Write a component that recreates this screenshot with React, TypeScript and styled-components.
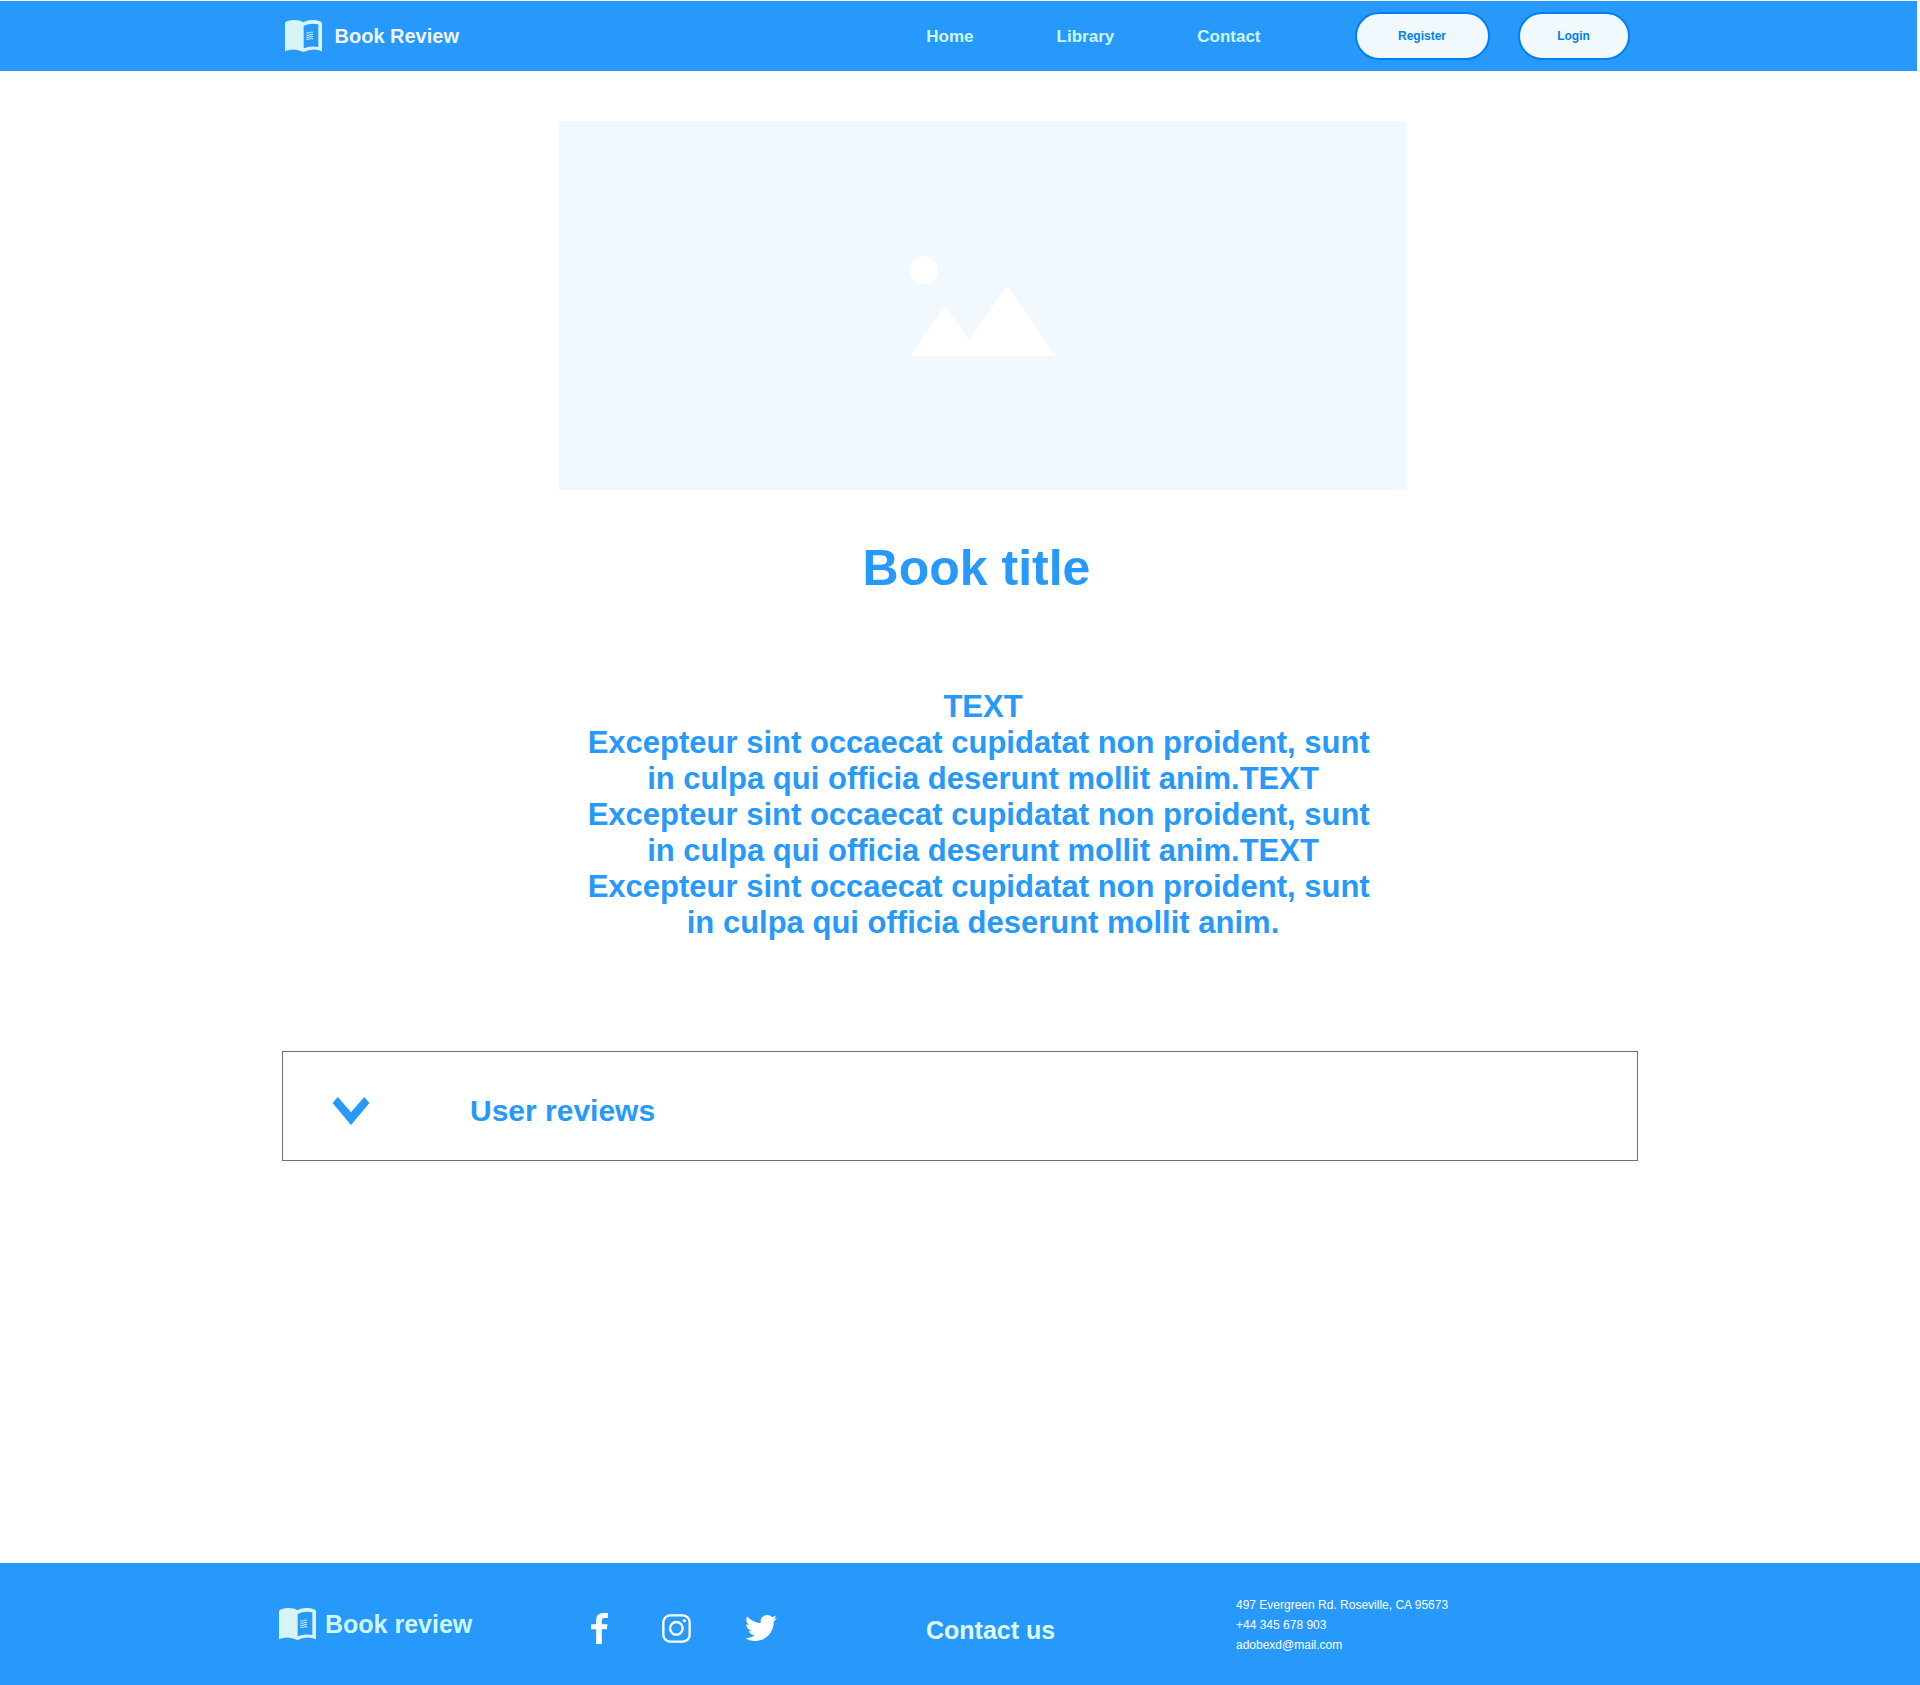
import React, { useState } from "react";
import styled, { createGlobalStyle } from "styled-components";
import { FaTwitter } from "react-icons/fa";

const color = {
  blue: "#2699fb",
  deepBlue: "#0080f0",
  pale: "#f1f9ff",
  mint: "#d8f5f5",
  ice: "#cdf8ff",
  line: "#707070",
};

const GlobalStyle = createGlobalStyle`
  * { box-sizing: border-box; }
  body {
    margin: 0;
    background: #fff;
    font-family: "Liberation Sans", Arial, sans-serif;
  }
  h1, h2, p { margin: 0; }
  a { color: inherit; text-decoration: none; }
`;

const Page = styled.div`
  min-height: 100vh;
  display: flex;
  flex-direction: column;
`;

const Header = styled.header`
  background: ${color.blue};
  margin: 1px 3px 0 0;
`;

const HeaderInner = styled.div`
  max-width: 1356px;
  min-height: 70px;
  margin: 0 auto;
  padding: 0 7px 0 4px;
  display: flex;
  align-items: center;
`;

const Brand = styled.a<{ $size: number; $gap: number; $tone: string }>`
  display: flex;
  align-items: center;
  gap: ${(p) => p.$gap}px;
  font-size: ${(p) => p.$size}px;
  font-weight: bold;
  color: ${(p) => p.$tone};
`;

const Nav = styled.nav`
  margin-left: auto;
  padding-top: 2px;
  display: flex;
  gap: 83px;
`;

const NavLink = styled.a`
  font-size: 17px;
  font-weight: bold;
  color: ${color.ice};
`;

const Actions = styled.div`
  display: flex;
  gap: 28px;
  margin-left: 94px;
`;

const PillButton = styled.button`
  min-width: 112px;
  height: 48px;
  padding: 0 32px;
  border: 2px solid ${color.deepBlue};
  border-radius: 24px;
  background: ${color.pale};
  color: ${color.deepBlue};
  font: bold 12px "Liberation Sans", Arial, sans-serif;
  cursor: pointer;
`;

const RegisterButton = styled(PillButton)`
  min-width: 135px;
`;

const Main = styled.main`
  width: 100%;
  max-width: 1356px;
  margin: 0 auto;
  padding: 50px 0 80px;
`;

const Article = styled.article`
  display: flex;
  flex-direction: column;
  align-items: center;
  padding-left: 46px;
`;

const Cover = styled.div`
  width: 100%;
  max-width: 848px;
  aspect-ratio: 848 / 369;
  display: flex;
  align-items: center;
  justify-content: center;
  background: ${color.pale};
`;

const Title = styled.h1`
  margin-top: 49px;
  padding-right: 13px;
  font-size: 50px;
  line-height: 58px;
  color: ${color.blue};
`;

const Summary = styled.p`
  max-width: 800px;
  margin-top: 92px;
  font-size: 31px;
  line-height: 36px;
  font-weight: bold;
  text-align: center;
  white-space: break-spaces;
  color: ${color.blue};
`;

const Reviews = styled.section`
  margin-top: 110px;
  border: 1px solid ${color.line};
`;

const ReviewsToggle = styled.button`
  width: 100%;
  min-height: 108px;
  padding: 10px 49px 0;
  display: flex;
  align-items: center;
  gap: 100px;
  border: 0;
  background: none;
  color: ${color.blue};
  font: bold 30px "Liberation Sans", Arial, sans-serif;
  cursor: pointer;
`;

const ReviewsBody = styled.p`
  padding: 0 49px 32px 186px;
  font-size: 17px;
  color: ${color.blue};
`;

const Footer = styled.footer`
  margin-top: auto;
  background: ${color.blue};
`;

const FooterInner = styled.div`
  max-width: 1362px;
  min-height: 122px;
  margin: 0 auto;
  display: grid;
  grid-template-columns: 312fr 335fr 310fr 405fr;
  align-items: center;
`;

const Social = styled.div`
  display: flex;
  align-items: center;
  gap: 54px;
  padding-top: 8px;
  color: #fff;

  a { display: flex; }
`;

const ContactHeading = styled.h2`
  padding-top: 12px;
  font-size: 25px;
  color: #e0ffff;
`;

const Address = styled.address`
  display: flex;
  flex-direction: column;
  padding-top: 2px;
  font-size: 12px;
  line-height: 20px;
  font-style: normal;
  color: #fff;
`;

function BookIcon() {
  return (
    <svg width="37" height="32" viewBox="0 0 111 96" aria-hidden="true">
      <path
        fill={color.mint}
        fillRule="evenodd"
        d="M0 9 Q4 1 27 0 Q45 0 55 7 Q66 0 84 0 Q107 1 111 9 V94 Q84 82 55 96 Q27 82 0 94 Z M56 18 Q74 8 100 13 V81 Q76 77 56 85 Z"
      />
      <path
        stroke={color.mint}
        strokeWidth="3"
        fill="none"
        d="M64 38 Q70 41 74 38 T84 37 M64 45 Q70 48 74 45 T84 44 M64 51 Q70 54 74 51 T84 50 M64 57 Q70 60 74 57 T84 57"
      />
    </svg>
  );
}

function LandscapeIcon() {
  return (
    <svg width="146" height="100" viewBox="0 0 146 100" fill="#fff" aria-hidden="true">
      <circle cx="14" cy="14" r="14" />
      <path d="M0 100 L35 50 L59 84 L97 30 L146 100 Z" />
    </svg>
  );
}

function ChevronIcon() {
  return (
    <svg width="38" height="28" viewBox="0 0 112 85" fill="currentColor" aria-hidden="true">
      <path d="M0 18 L16 0 L56 46 L96 0 L112 18 L56 85 Z" />
    </svg>
  );
}

function FacebookIcon() {
  return (
    <svg width="17" height="31" viewBox="0 0 50 93" fill="currentColor" aria-hidden="true">
      <path d="M50 0 H36 Q15 0 15 21 V34 H0 V49 H15 V93 H32 V49 H47 L49 34 H32 V23 Q32 15 40 15 H50 Z" />
    </svg>
  );
}

function InstagramIcon() {
  return (
    <svg width="29" height="29" viewBox="0 0 87 87" aria-hidden="true">
      <rect x="4" y="4" width="79" height="79" rx="21" fill="none" stroke="currentColor" strokeWidth="7" />
      <circle cx="43" cy="43" r="19" fill="none" stroke="currentColor" strokeWidth="7" />
      <circle cx="67" cy="20" r="5" fill="currentColor" />
    </svg>
  );
}

const links = ["Home", "Library", "Contact"];

const sentence =
  "Excepteur sint occaecat cupidatat non proident, sunt in culpa qui officia deserunt mollit anim.";
const summary = Array(3).fill(sentence).join("TEXT\n");

export default function App() {
  const [open, setOpen] = useState(false);

  return (
    <>
      <GlobalStyle />
      <Page>
        <Header>
          <HeaderInner>
            <Brand href="#" $size={20} $gap={13} $tone="#f1f5f9">
              <BookIcon />
              Book Review
            </Brand>
            <Nav>
              {links.map((label) => (
                <NavLink key={label} href="#">
                  {label}
                </NavLink>
              ))}
            </Nav>
            <Actions>
              <RegisterButton type="button">Register</RegisterButton>
              <PillButton type="button">Login</PillButton>
            </Actions>
          </HeaderInner>
        </Header>

        <Main>
          <Article>
            <Cover>
              <LandscapeIcon />
            </Cover>
            <Title>Book title</Title>
            <Summary>{`TEXT\n${summary}`}</Summary>
          </Article>
          <Reviews>
            <ReviewsToggle type="button" aria-expanded={open} onClick={() => setOpen(!open)}>
              <ChevronIcon />
              User reviews
            </ReviewsToggle>
            {open && <ReviewsBody>No reviews yet.</ReviewsBody>}
          </Reviews>
        </Main>

        <Footer>
          <FooterInner>
            <Brand href="#" $size={25} $gap={9} $tone={color.ice}>
              <BookIcon />
              Book review
            </Brand>
            <Social>
              <a href="#" aria-label="Facebook">
                <FacebookIcon />
              </a>
              <a href="#" aria-label="Instagram">
                <InstagramIcon />
              </a>
              <a href="#" aria-label="Twitter">
                <FaTwitter size={32} />
              </a>
            </Social>
            <ContactHeading>Contact us</ContactHeading>
            <Address>
              <span>497 Evergreen Rd. Roseville, CA 95673</span>
              <a href="tel:+44345678903">+44 345 678 903</a>
              <a href="mailto:adobexd@mail.com">adobexd@mail.com</a>
            </Address>
          </FooterInner>
        </Footer>
      </Page>
    </>
  );
}
